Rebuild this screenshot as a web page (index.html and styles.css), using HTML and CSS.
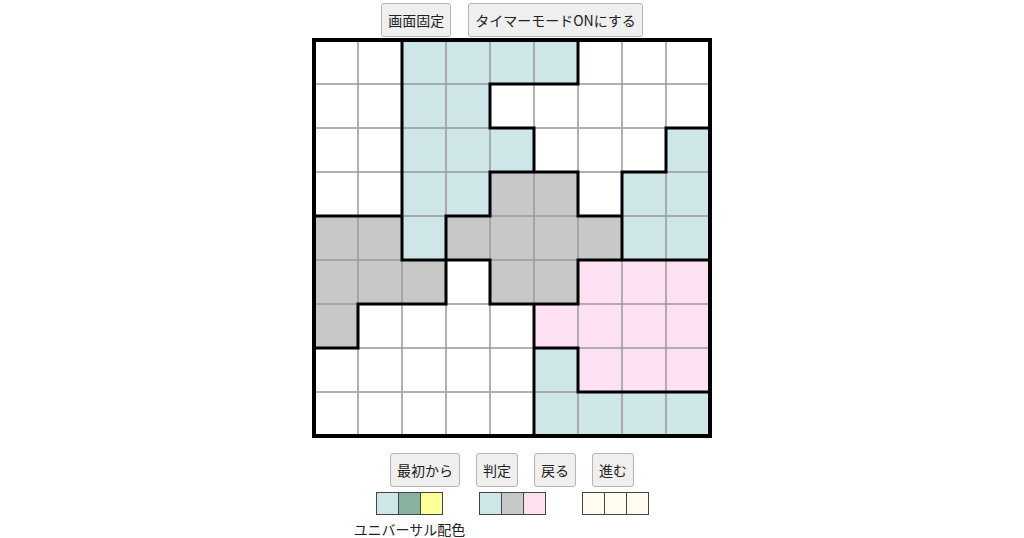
FILE: index.html
```html
<!DOCTYPE html>
<html lang="ja">
<head>
<meta charset="utf-8">
<title>パズル</title>
<link rel="stylesheet" href="styles.css">
</head>
<body>
<div class="page">
  <div class="toolbar top">
    <button class="btn">画面固定</button>
    <button class="btn">タイマーモードONにする</button>
  </div>
  <svg class="board" width="400" height="400" viewBox="0 0 400 400" xmlns="http://www.w3.org/2000/svg">
    <rect x="2" y="2" width="396" height="396" fill="#ffffff"/>
    <g fill="#cfe6e8">
      <rect x="90" y="2" width="176" height="44"/>
      <rect x="90" y="46" width="88" height="44"/>
      <rect x="90" y="90" width="132" height="44"/>
      <rect x="90" y="134" width="88" height="44"/>
      <rect x="90" y="178" width="44" height="44"/>
      <rect x="354" y="90" width="44" height="44"/>
      <rect x="310" y="134" width="88" height="88"/>
      <rect x="222" y="310" width="44" height="44"/>
      <rect x="222" y="354" width="176" height="44"/>
    </g>
    <g fill="#c8c8c8">
      <rect x="178" y="134" width="88" height="44"/>
      <rect x="134" y="178" width="176" height="44"/>
      <rect x="178" y="222" width="88" height="44"/>
      <rect x="2" y="178" width="88" height="44"/>
      <rect x="2" y="222" width="132" height="44"/>
      <rect x="2" y="266" width="44" height="44"/>
    </g>
    <g fill="#fde0f1">
      <rect x="266" y="222" width="132" height="44"/>
      <rect x="222" y="266" width="176" height="44"/>
      <rect x="266" y="310" width="132" height="44"/>
    </g>
    <path stroke="#999999" stroke-width="1.5" fill="none"
      d="M2 46H398M2 90H398M2 134H398M2 178H398M2 222H398M2 266H398M2 310H398M2 354H398
         M46 2V398M90 2V398M134 2V398M178 2V398M222 2V398M266 2V398M310 2V398M354 2V398"/>
    <path stroke="#000000" stroke-width="3" stroke-linecap="square" fill="none"
      d="M178 46H266
         M178 90H222M354 90H398
         M178 134H266M310 134H354
         M2 178H90M134 178H178M266 178H310
         M90 222H178M266 222H398
         M46 266H134M178 266H266
         M2 310H46M222 310H266
         M266 354H398
         M46 266V310
         M90 2V222
         M134 178V266
         M178 46V90M178 134V178M178 222V266
         M222 90V134M222 266V398
         M266 2V46M266 134V178M266 222V266M266 310V354
         M310 134V222
         M354 90V134"/>
    <rect x="2" y="2" width="396" height="396" fill="none" stroke="#000000" stroke-width="4"/>
  </svg>
  <div class="toolbar bottom">
    <button class="btn">最初から</button>
    <button class="btn">判定</button>
    <button class="btn">戻る</button>
    <button class="btn">進む</button>
  </div>
  <div class="palettes">
    <div class="palette-col">
      <div class="swatches">
        <span class="sw cyan"></span><span class="sw green"></span><span class="sw yellow"></span>
      </div>
      <div class="label">ユニバーサル配色</div>
    </div>
    <div class="palette-col">
      <div class="swatches">
        <span class="sw cyan"></span><span class="sw gray"></span><span class="sw pink"></span>
      </div>
    </div>
    <div class="palette-col">
      <div class="swatches">
        <span class="sw cream"></span><span class="sw cream"></span><span class="sw cream"></span>
      </div>
    </div>
  </div>
</div>
</body>
</html>
```

FILE: styles.css
```css
html, body {
  margin: 0;
  padding: 0;
  background: #ffffff;
}

body {
  font-family: "Noto Sans CJK JP", "Noto Sans", sans-serif;
  color: #222222;
}

.page {
  display: flex;
  flex-direction: column;
  align-items: center;
}

.toolbar {
  display: flex;
  justify-content: center;
  gap: 16px;
}

.toolbar.top {
  padding-top: 3px;
  gap: 17px;
}

.toolbar.bottom {
  margin-top: 15px;
}

.btn {
  font-family: "Noto Sans CJK JP", "Noto Sans", sans-serif;
  font-size: 14px;
  line-height: 20px;
  padding: 6px 6px;
  margin: 0;
  color: #222222;
  background: #efefef;
  border: 1px solid #b4b4b4;
  border-radius: 3px;
}

.board {
  display: block;
  margin-top: 1px;
}

.palettes {
  display: flex;
  gap: 36px;
  margin-top: 5px;
  margin-left: 1px;
}

.palette-col {
  width: 67px;
  display: flex;
  flex-direction: column;
  align-items: center;
}

.swatches {
  display: flex;
  border: 1px solid #444444;
}

.sw {
  display: block;
  width: 21px;
  height: 21px;
  border-right: 1px solid #444444;
}

.sw:last-child {
  border-right: none;
}

.cyan { background: #cfe6e8; }
.green { background: #86b29e; }
.yellow { background: #ffff99; }
.gray { background: #c8c8c8; }
.pink { background: #ffe0f1; }
.cream { background: #fffbee; }

.label {
  margin: 4px -30px 0;
  font-size: 14px;
  line-height: 20px;
  white-space: nowrap;
  text-align: center;
  color: #222222;
}
```
